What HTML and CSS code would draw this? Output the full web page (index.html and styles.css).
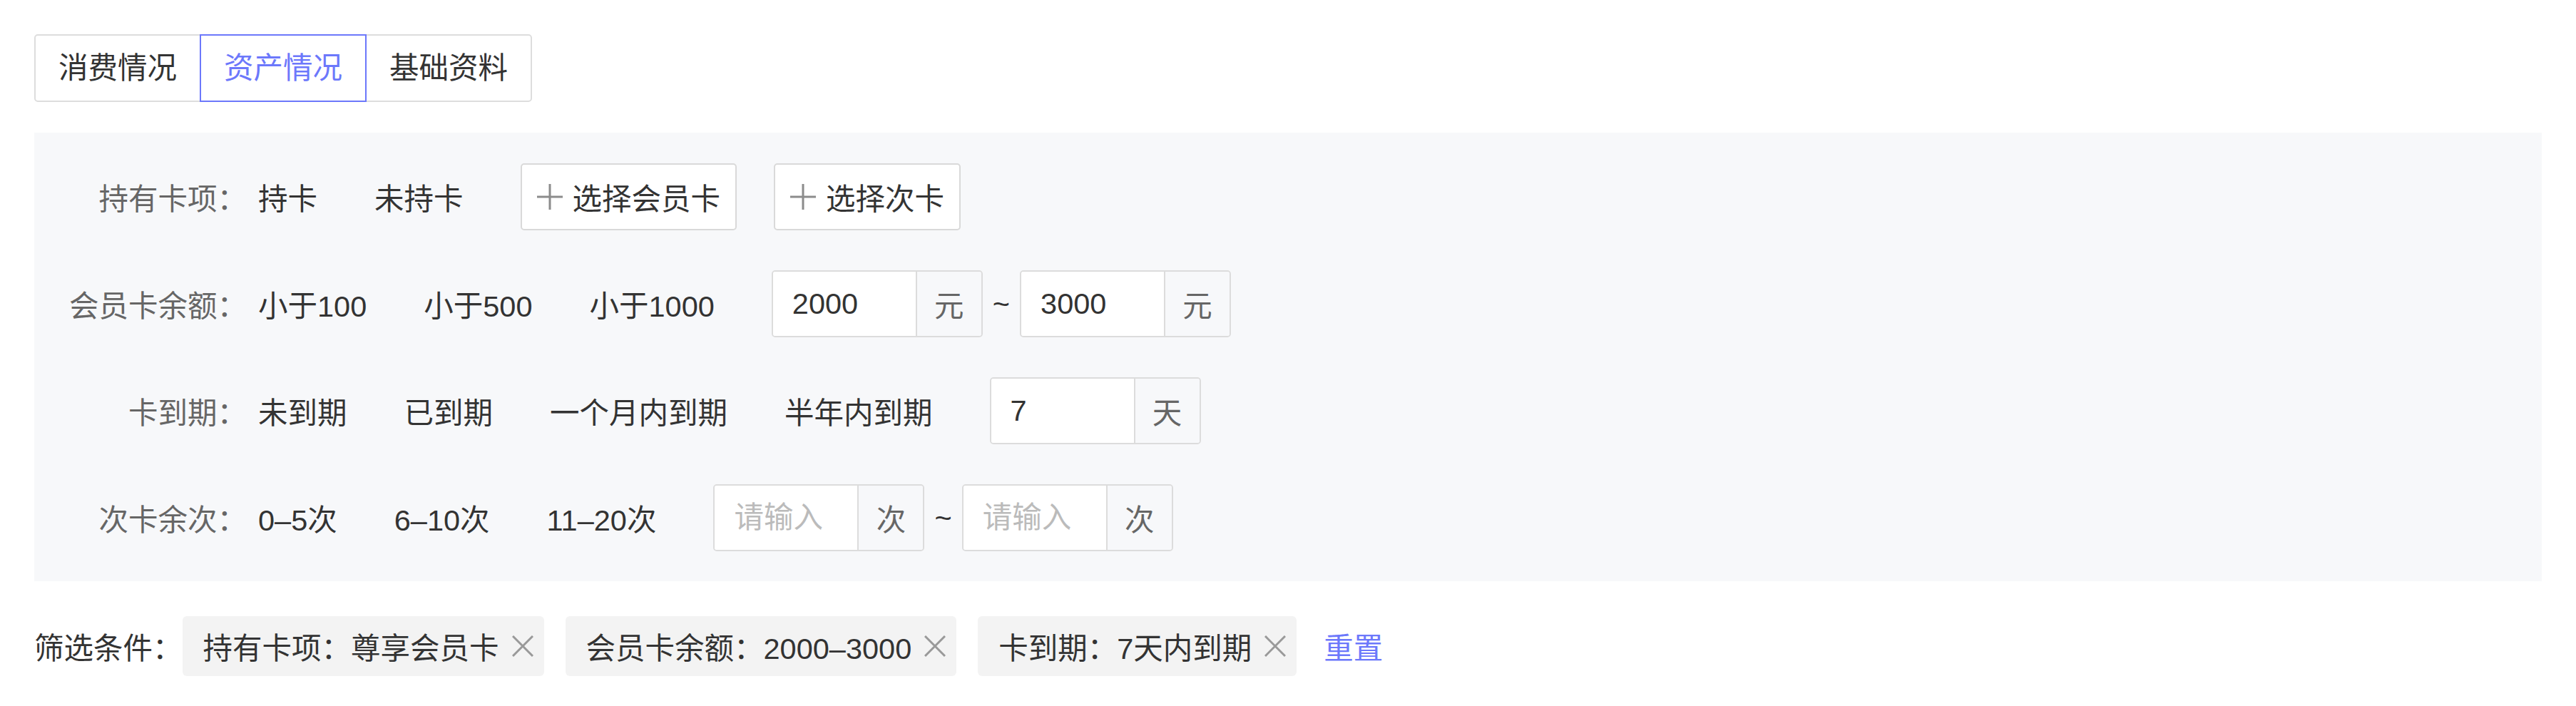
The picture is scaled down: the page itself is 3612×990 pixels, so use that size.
FILE: index.html
```html
<!DOCTYPE html>
<html lang="zh">
<head>
    <meta charset="UTF-8">
    <meta name="viewport" content="width=device-width, initial-scale=1.0">
    <title>会员筛选</title>
    <link rel="stylesheet" href="styles.css">
</head>
<body>
    <div class="tabs">
        <div class="tab">消费情况</div>
        <div class="tab tab-active">资产情况</div>
        <div class="tab">基础资料</div>
    </div>

    <div class="filter-panel">
        <div class="filter-row">
            <div class="filter-label">持有卡项：</div>
            <span class="option">持卡</span>
            <span class="option">未持卡</span>
            <button class="btn-select">
                <svg class="icon-plus" viewBox="0 0 36 36"><path d="M18 0v36M0 18h36"/></svg>选择会员卡
            </button>
            <button class="btn-select">
                <svg class="icon-plus" viewBox="0 0 36 36"><path d="M18 0v36M0 18h36"/></svg>选择次卡
            </button>
        </div>

        <div class="filter-row">
            <div class="filter-label">会员卡余额：</div>
            <span class="option">小于100</span>
            <span class="option">小于500</span>
            <span class="option">小于1000</span>
            <div class="input-group">
                <input class="input" type="text" value="2000">
                <span class="addon">元</span>
            </div>
            <span class="range-sep">~</span>
            <div class="input-group">
                <input class="input" type="text" value="3000">
                <span class="addon">元</span>
            </div>
        </div>

        <div class="filter-row">
            <div class="filter-label">卡到期：</div>
            <span class="option">未到期</span>
            <span class="option">已到期</span>
            <span class="option">一个月内到期</span>
            <span class="option">半年内到期</span>
            <div class="input-group">
                <input class="input" type="text" value="7">
                <span class="addon">天</span>
            </div>
        </div>

        <div class="filter-row">
            <div class="filter-label">次卡余次：</div>
            <span class="option">0–5次</span>
            <span class="option">6–10次</span>
            <span class="option">11–20次</span>
            <div class="input-group">
                <input class="input" type="text" placeholder="请输入">
                <span class="addon">次</span>
            </div>
            <span class="range-sep">~</span>
            <div class="input-group">
                <input class="input" type="text" placeholder="请输入">
                <span class="addon">次</span>
            </div>
        </div>
    </div>

    <div class="selected-bar">
        <span class="selected-label">筛选条件：</span>
        <span class="tag">持有卡项：尊享会员卡<svg class="tag-close" viewBox="0 0 30 30"><path d="M1 1l28 28M29 1L1 29"/></svg></span>
        <span class="tag">会员卡余额：2000–3000<svg class="tag-close" viewBox="0 0 30 30"><path d="M1 1l28 28M29 1L1 29"/></svg></span>
        <span class="tag">卡到期：7天内到期<svg class="tag-close" viewBox="0 0 30 30"><path d="M1 1l28 28M29 1L1 29"/></svg></span>
        <a class="reset" href="#">重置</a>
    </div>
</body>
</html>
```

FILE: styles.css
```css
body {
    font-family: 'Liberation Sans', 'Noto Sans CJK SC', sans-serif;
    font-size: 41.5px;
    color: #333333;
    background-color: #ffffff;
    margin: 0;
    padding: 48px;
}
.tabs {
    display: flex;
    margin-bottom: 43px;
}
.tab {
    height: 95px;
    line-height: 91px;
    padding: 0 32px;
    border: 2px solid #dddddd;
    box-sizing: border-box;
    background-color: #ffffff;
    color: #333333;
}
.tab + .tab {
    margin-left: -2px;
}
.tab:first-child {
    border-radius: 5px 0 0 5px;
}
.tab:last-child {
    border-radius: 0 5px 5px 0;
}
.tab-active {
    border-color: #6c78fb;
    color: #6c78fb;
    position: relative;
    z-index: 1;
}
.filter-panel {
    background-color: #f7f8fa;
    padding: 43px 48px 42px;
    display: flex;
    flex-direction: column;
    gap: 56px;
}
.filter-row {
    display: flex;
    align-items: center;
    height: 94px;
    white-space: nowrap;
}
.filter-label {
    width: 250px;
    margin-right: 16px;
    text-align: right;
    color: #666666;
}
.option {
    margin-right: 80px;
    color: #333333;
}
.btn-select {
    display: flex;
    align-items: center;
    height: 94px;
    padding: 0 21px;
    margin-right: 52px;
    border: 2px solid #d9d9d9;
    border-radius: 5px;
    background-color: #ffffff;
    font: inherit;
    color: #333333;
}
.icon-plus {
    width: 36px;
    height: 36px;
    margin-right: 14px;
    stroke: #8c8c8c;
    stroke-width: 3;
    fill: none;
}
.input-group {
    display: flex;
    height: 94px;
    border: 2px solid #dcdcdc;
    border-radius: 5px;
    box-sizing: border-box;
    overflow: hidden;
}
.input {
    width: 202px;
    box-sizing: border-box;
    border: none;
    border-right: 2px solid #dcdcdc;
    padding: 0 27px;
    font: inherit;
    color: #333333;
    background-color: #ffffff;
    outline: none;
}
.input::placeholder {
    color: #bbbbbb;
}
.addon {
    display: flex;
    align-items: center;
    justify-content: center;
    width: 90px;
    background-color: #f7f8fa;
    color: #666666;
}
.range-sep {
    margin: 0 14px;
    color: #333333;
}
.selected-bar {
    display: flex;
    align-items: center;
    margin-top: 49px;
    white-space: nowrap;
}
.tag {
    display: flex;
    align-items: center;
    height: 84px;
    padding: 0 15px 0 29px;
    margin-right: 30px;
    border-radius: 6px;
    background-color: #f3f3f3;
    color: #333333;
}
.tag-close {
    width: 30px;
    height: 30px;
    margin-left: 18px;
    stroke: #999999;
    stroke-width: 3;
    fill: none;
}
.reset {
    margin-left: 8px;
    color: #6c78fb;
    text-decoration: none;
}
```
